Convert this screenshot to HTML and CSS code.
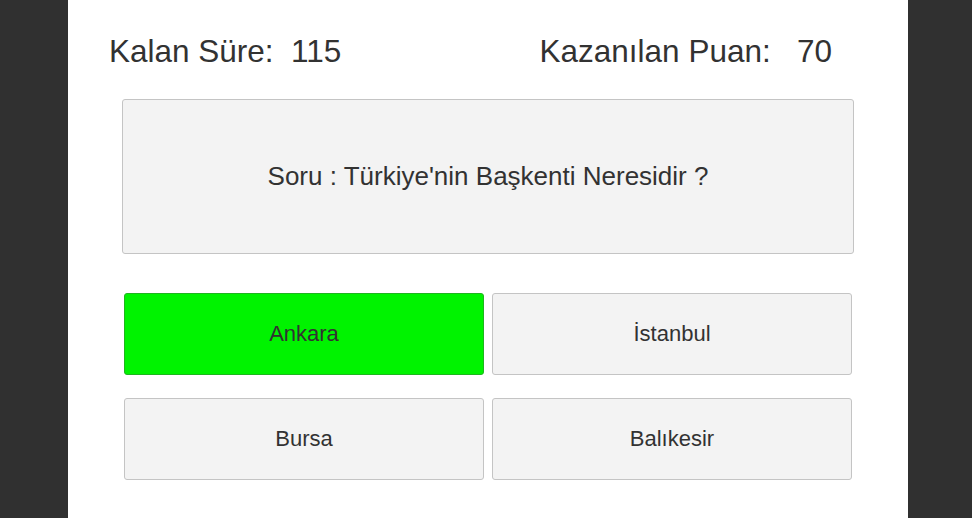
FILE: index.html
```html
<!DOCTYPE html>
<html lang="tr">
<head>
<meta charset="utf-8">
<title>Quiz</title>
<link rel="stylesheet" href="styles.css">
</head>
<body>
<main class="panel">
  <header class="stats">
    <span class="stat">Kalan Süre:&nbsp; 115</span>
    <span class="stat">Kazanılan Puan:&nbsp;&nbsp; 70</span>
  </header>
  <section class="question">Soru : Türkiye'nin Başkenti Neresidir ?</section>
  <section class="answers">
    <button class="answer correct">Ankara</button>
    <button class="answer">İstanbul</button>
    <button class="answer">Bursa</button>
    <button class="answer">Balıkesir</button>
  </section>
</main>
</body>
</html>
```
FILE: styles.css
```css
* { box-sizing: border-box; }
html, body { margin: 0; padding: 0; }
body {
  background: #303030;
  height: 518px;
  overflow: hidden;
  font-family: "Liberation Sans", Arial, sans-serif;
  color: #323232;
}
.panel {
  width: 840px;
  height: 518px;
  margin-left: 68px;
  background: #ffffff;
  display: flex;
  flex-direction: column;
  padding-top: 36px;
}
.stats {
  display: flex;
  justify-content: space-between;
  padding: 0 76px 0 41px;
  font-size: 31.5px;
  line-height: 31px;
  height: 31px;
  white-space: nowrap;
}
.question {
  margin: 32px 0 0 54px;
  width: 732px;
  height: 155px;
  background: #f3f3f3;
  border: 1px solid #c4c4c4;
  border-radius: 3px;
  display: flex;
  align-items: center;
  justify-content: center;
  font-size: 26px;
}
.answers {
  margin: 39px 0 0 56px;
  display: grid;
  grid-template-columns: 360px 360px;
  grid-template-rows: 82px 82px;
  column-gap: 8px;
  row-gap: 23px;
}
.answer {
  font-family: "Liberation Sans", Arial, sans-serif;
  font-size: 22px;
  color: #323232;
  background: #f3f3f3;
  border: 1px solid #c4c4c4;
  border-radius: 3px;
  padding: 0;
  margin: 0;
}
.answer.correct {
  background: #00f300;
  border-color: #1fb51f;
}
```
